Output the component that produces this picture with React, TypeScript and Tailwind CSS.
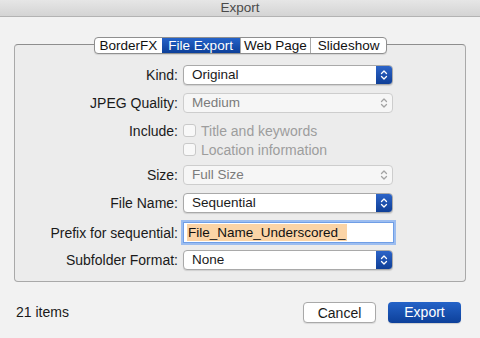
import React from 'react'

const font = { fontFamily: '"Liberation Sans", Arial, sans-serif' }

const Arrows = ({ color }: { color: string }) => (
  <svg width="8" height="12" viewBox="0 0 8 12" fill="none" stroke={color} strokeWidth="1.3" strokeLinecap="round" strokeLinejoin="round">
    <path d="M1.5 4.5 L4 2 L6.5 4.5" />
    <path d="M1.5 7.5 L4 10 L6.5 7.5" />
  </svg>
)

const Popup = ({ value, disabled }: { value: string; disabled?: boolean }) => (
  <div
    className={`flex h-[20px] w-[210px] items-stretch overflow-hidden rounded-[4px] border ${
      disabled ? 'border-[#cdcdcd] bg-[#f6f6f6] text-[#7b7b7b]' : 'border-[#a9a9a9] bg-white text-[#1a1a1a] shadow-[0_1px_1px_rgba(0,0,0,0.12)]'
    }`}
  >
    <span className="flex-1 pl-[8px] text-[13.5px] leading-[18px]">{value}</span>
    {disabled ? (
      <span className="flex w-[17px] items-center justify-center">
        <Arrows color="#a3a3a3" />
      </span>
    ) : (
      <span className="flex w-[16px] items-center justify-center bg-gradient-to-b from-[#2c64c8] to-[#0f3f97]">
        <Arrows color="#ffffff" />
      </span>
    )}
  </div>
)

const Row = ({ label, children, className = '' }: { label?: string; children: React.ReactNode; className?: string }) => (
  <div className={`flex items-center ${className}`}>
    <span className="w-[163px] text-right text-[14px] leading-[18px] text-[#1a1a1a]">{label}</span>
    <div className="ml-[5px] flex">{children}</div>
  </div>
)

const Check = ({ text }: { text: string }) => (
  <div className="flex items-center gap-[5px]">
    <span className="h-[13px] w-[13px] rounded-[3px] border border-[#c9c9c9] bg-[#f8f8f8]" />
    <span className="text-[14px] leading-[18px] text-[#9d9d9d]">{text}</span>
  </div>
)

const tabs = ['BorderFX', 'File Export', 'Web Page', 'Slideshow']
const tabW = ['w-[67px]', 'w-[78px]', 'w-[71px]', 'w-[76px]']

export default function App() {
  return (
    <div className="h-[338px] w-[480px] overflow-hidden bg-[#f2f2f2]" style={font}>
      <div className="flex h-[17px] items-center justify-center border-b border-[#b3b3b3] bg-gradient-to-b from-[#e6e6e6] to-[#d4d4d4] text-[13.5px] text-[#4a4a4a]">
        Export
      </div>

      <div className="mx-[14px] mt-[27px] h-[238px] rounded-[4px] border border-[#a9a9a9] border-t-[#8e8e8e] bg-[#ececec]">
        <div className="-mt-[8px] ml-[79px] flex h-[17px] w-[293px] overflow-hidden rounded-[4px] border border-[#8f8f8f] bg-white shadow-[0_1px_1px_rgba(0,0,0,0.1)]">
          {tabs.map((t, i) => (
            <div
              key={t}
              className={`${tabW[i]} flex items-center justify-center text-[13.5px] leading-none ${
                i === 1 ? 'bg-gradient-to-b from-[#2563c9] to-[#0c3f99] text-white' : 'text-[#111]'
              } ${i > 1 ? 'border-l border-[#a9a9a9]' : ''}`}
            >
              {t}
            </div>
          ))}
        </div>

        <div className="flex flex-col">
          <Row label="Kind:" className="mt-[11px] h-[20px]">
            <Popup value="Original" />
          </Row>
          <Row label="JPEG Quality:" className="mt-[8px] h-[20px]">
            <Popup value="Medium" disabled />
          </Row>
          <Row label="Include:" className="mt-[8px] h-[19px]">
            <Check text="Title and keywords" />
          </Row>
          <Row className="h-[19px]">
            <Check text="Location information" />
          </Row>
          <Row label="Size:" className="mt-[6px] h-[20px]">
            <Popup value="Full Size" disabled />
          </Row>
          <Row label="File Name:" className="mt-[8px] h-[20px]">
            <Popup value="Sequential" />
          </Row>
          <Row label="Prefix for sequential:" className="mt-[9px] h-[21px]">
            <div className="flex h-[21px] w-[211px] items-center border border-[#6f9ee6] bg-white shadow-[0_0_0_2px_#9cbdf0]">
              <span className="ml-[3px] bg-[#fbd4a6] px-[1px] text-[13.5px] leading-[17px] text-[#111]">
                File_Name_Underscored_
              </span>
            </div>
          </Row>
          <Row label="Subfolder Format:" className="mt-[7px] h-[20px]">
            <Popup value="None" />
          </Row>
        </div>
      </div>

      <div className="mt-[20px] flex items-center px-[16px]">
        <span className="flex-1 text-[14px] text-[#1a1a1a]">21 items</span>
        <button className="h-[21px] w-[73px] rounded-[4px] border border-[#a9a9a9] bg-white text-[14px] text-[#1a1a1a] shadow-[0_1px_1px_rgba(0,0,0,0.1)]">
          Cancel
        </button>
        <button className="ml-[12px] mr-[3px] h-[21px] w-[73px] rounded-[4px] bg-gradient-to-b from-[#2463c8] to-[#0d409a] text-[14px] text-white shadow-[0_1px_1px_rgba(0,0,0,0.15)]">
          Export
        </button>
      </div>
    </div>
  )
}
